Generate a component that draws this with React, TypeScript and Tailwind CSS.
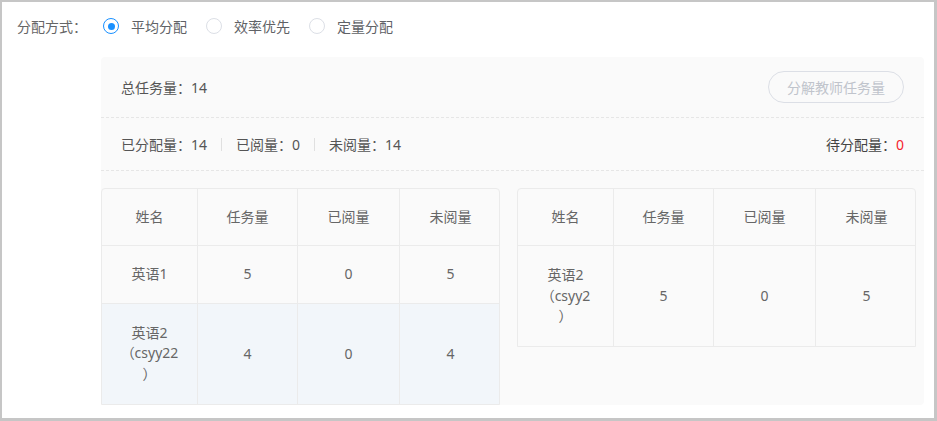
import React from "react";

const font = { fontFamily: '"Noto Sans", "Noto Sans CJK SC", sans-serif' };

function Radio({ checked, label }: { checked?: boolean; label: string }) {
  return (
    <div className="flex items-center">
      {checked ? (
        <span className="w-[16px] h-[16px] rounded-full border border-[#1890ff] flex items-center justify-center">
          <span className="w-[7px] h-[7px] rounded-full bg-[#1890ff]" />
        </span>
      ) : (
        <span className="w-[16px] h-[16px] rounded-full border border-[#dcdfe6] bg-white" />
      )}
      <span className="ml-[12px] text-[14px] text-[#606266]">{label}</span>
    </div>
  );
}

type Row = { name: string; task: number; read: number; unread: number; hl?: boolean; tall?: boolean };

function Table({ rows }: { rows: Row[] }) {
  const cols = "grid grid-cols-[96px_100px_102px_101px]";
  const cell = "flex items-center justify-center text-center border-r border-[#ebebeb] py-[18px] leading-[20px]";
  return (
    <div className="w-[399px] border border-[#ebebeb] rounded-t-[4px] text-[14px] text-[#666]">
      <div className={cols + " border-b border-[#ebebeb]"}>
        {["姓名", "任务量", "已阅量", "未阅量"].map((h, i) => (
          <div key={h} className={cell + (i === 3 ? " border-r-0" : "")}>{h}</div>
        ))}
      </div>
      {rows.map((r, ri) => (
        <div
          key={ri}
          className={
            cols +
            (ri < rows.length - 1 ? " border-b border-[#ebebeb]" : "") +
            (r.hl ? " bg-[#f2f6fa]" : "") +
            (r.tall ? " min-h-[100px]" : "")
          }
        >
          <div className={cell}>
            <div className="w-[60px] break-words leading-[20.5px] [text-spacing-trim:space-all]">{r.name}</div>
          </div>
          <div className={cell}>{r.task}</div>
          <div className={cell}>{r.read}</div>
          <div className={cell + " border-r-0"}>{r.unread}</div>
        </div>
      ))}
    </div>
  );
}

export default function App() {
  return (
    <div style={font} className="w-[937px] h-[421px] bg-white border-l-2 border-t-2 border-r-[3px] border-b-[3px] border-[#c6c6c6] overflow-hidden">
      <div className="flex items-center h-[48px] pl-[15px]">
        <span className="text-[14px] text-[#666] w-[86px]">分配方式：</span>
        <div className="flex items-center gap-[19px]">
          <Radio checked label="平均分配" />
          <Radio label="效率优先" />
          <Radio label="定量分配" />
        </div>
      </div>
      <div className="ml-[99px] mr-[10px] mt-[7px] h-[348px] bg-[#fafafa] rounded-[4px] flex flex-col">
        <div className="h-[61px] flex items-center justify-between px-[20px] border-b border-dashed border-[#e6e6e6]">
          <span className="text-[14px] text-[#555]">总任务量：14</span>
          <button className="h-[32px] w-[136px] rounded-full border border-[#dcdfe6] text-[14px] text-[#c0c4cc] bg-[#fafafa]">
            分解教师任务量
          </button>
        </div>
        <div className="h-[53px] flex items-center justify-between px-[20px] border-b border-dashed border-[#e6e6e6] text-[14px] text-[#555]">
          <div className="flex items-center">
            <span>已分配量：14</span>
            <span className="mx-[14px] w-px h-[13px] bg-[#e0e0e0]" />
            <span>已阅量：0</span>
            <span className="mx-[14px] w-px h-[13px] bg-[#e0e0e0]" />
            <span>未阅量：14</span>
          </div>
          <span className="text-[#444]">
            待分配量：<span className="text-[#f5222d]">0</span>
          </span>
        </div>
        <div className="mt-[17px] flex items-start gap-[17px]">
          <Table
            rows={[
              { name: "英语1", task: 5, read: 0, unread: 5 },
              { name: "英语2（csyy22）", task: 4, read: 0, unread: 4, hl: true, tall: true },
            ]}
          />
          <Table rows={[{ name: "英语2（csyy2）", task: 5, read: 0, unread: 5, tall: true }]} />
        </div>
      </div>
    </div>
  );
}
